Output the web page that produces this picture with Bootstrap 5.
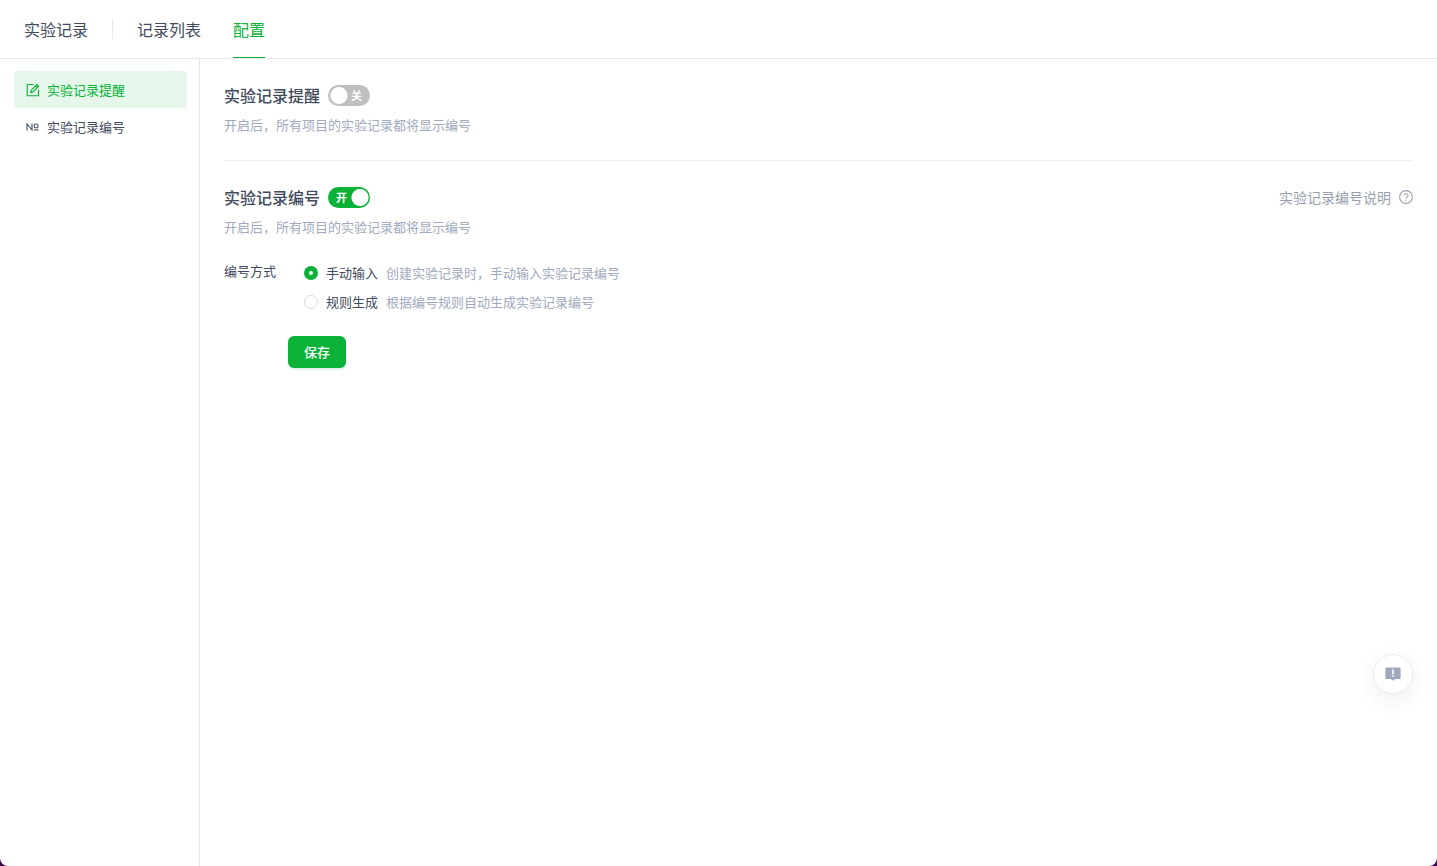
<!DOCTYPE html>
<html lang="zh-CN">
<head>
<meta charset="utf-8">
<meta name="viewport" content="width=device-width, initial-scale=1">
<title>实验记录 - 配置</title>
<link href="https://cdn.jsdelivr.net/npm/bootstrap@5.3.0/dist/css/bootstrap.min.css" rel="stylesheet">
<style>
  :root {
    --brand: #0bb237;
    --brand-soft: #e5f7eb;
    --ink: #414b5c;
    --ink-soft: #a0a9bd;
    --rule: #e8e9ed;
  }
  body {
    background: #3a0a4a;
    color: var(--ink);
    font-family: "Noto Sans CJK SC", sans-serif;
    font-size: 13px;
    line-height: 20px;
  }
  .shell { background: #fff; border-radius: 0 0 8px 8px; overflow: hidden; }
  .topbar { border-bottom: 1px solid var(--rule); padding: 0 24px; font-size: 16px; line-height: 24px; }
  .topbar .divider { width: 1px; height: 20px; background: var(--rule); margin: 0 24px; }
  .topbar .nav { gap: 32px; }
  .topbar .nav-link { color: var(--ink); padding: 17px 0 16px; border-bottom: 1px solid transparent; }
  .topbar .nav-link.active { color: var(--brand); border-color: var(--brand); }
  .sidebar { width: 200px; border-right: 1px solid var(--rule); padding: 12px 12px 12px 14px; }
  .sidebar .nav-link { color: var(--ink); padding: 9px 12px 8px; border-radius: 4px; gap: 7px; }
  .sidebar .nav-link.active { color: var(--brand); background: var(--brand-soft); }
  .panel { padding: 24px 0 25px; }
  .panel + .panel { border-top: 1px solid #f0f0f0; }
  .panel-title { font-size: 16px; line-height: 24px; font-weight: 500; margin: 0; }
  .hint { color: var(--ink-soft); }
  .panel-hint { margin: 8px 0 0; }
  .toggle { width: 42px; height: 21px; }
  .toggle input {
    appearance: none; display: block; width: 42px; height: 21px; margin: 0; border-radius: 11px; cursor: pointer;
    background: radial-gradient(circle at 11px 50%, #fff 8px, transparent 9px) #bfbfbf;
  }
  .toggle input:checked { background: radial-gradient(circle at 32px 50%, #fff 8px, transparent 9px) var(--brand); }
  .toggle label { position: absolute; top: 0; right: 8px; color: #fff; font-size: 11px; font-weight: 700; line-height: 21px; pointer-events: none; }
  .toggle input:checked + label { right: auto; left: 8px; }
  .toggle .on, .toggle input:checked + label .off { display: none; }
  .toggle input:checked + label .on { display: inline; }
  .help { color: #979fae; font-size: 14px; }
  .mode-list { gap: 9px; padding-top: 2px; margin-left: 28px; }
  .mode-list input {
    appearance: none; width: 14px; height: 14px; margin: 0; border: 1px solid #d9d9d9; border-radius: 50%; background: #fff;
  }
  .mode-list input:checked { border: 5px solid var(--brand); }
  .btn-save {
    --bs-btn-bg: var(--brand); --bs-btn-color: #fff; --bs-btn-hover-bg: #099c30; --bs-btn-hover-color: #fff;
    --bs-btn-border-width: 0; --bs-btn-font-size: 13px; --bs-btn-line-height: 20px; --bs-btn-border-radius: 6px;
    --bs-btn-padding-x: 16px; --bs-btn-padding-y: 6px; --bs-btn-font-weight: 500;
    --bs-btn-box-shadow: none;
    margin: 24px 0 0 64px;
  }
  .btn.btn-save { box-shadow: 0 2px 0 #e2f2e7; }
  .feedback {
    position: fixed; right: 24px; bottom: 172px; width: 40px; height: 40px; padding: 0;
    border: 1px solid #e9ebf3; border-radius: 50%; background: #fff; box-shadow: 0 6px 20px rgba(40, 50, 80, .08);
  }
</style>
</head>
<body>
<div class="shell min-vh-100 d-flex flex-column">
  <header class="topbar d-flex align-items-center">
    <span>实验记录</span>
    <span class="divider"></span>
    <nav class="nav">
      <a class="nav-link" href="#list">记录列表</a>
      <a class="nav-link active" href="#config" aria-current="page">配置</a>
    </nav>
  </header>
  <div class="d-flex flex-grow-1">
    <aside class="sidebar flex-shrink-0">
      <nav class="nav flex-column">
        <a class="nav-link active d-flex align-items-center" href="#remind">
          <svg width="14" height="14" viewBox="0 0 14 14" fill="none" stroke="currentColor" stroke-width="1.1" aria-hidden="true"><path d="M7.500 1.500H1.200v11.300h11.300V6.800"/><path d="M4.700 9.400l.5-2.200 5.700-5.700 1.700 1.700-5.700 5.700zM9.600 2.800l1.700 1.700"/></svg>
          <span>实验记录提醒</span>
        </a>
        <a class="nav-link d-flex align-items-center" href="#number">
          <svg width="14" height="14" viewBox="0 0 14 14" fill="none" stroke="currentColor" stroke-width="1.1" aria-hidden="true"><path d="M1 10.500V4l5 6V3.500"/><rect x="8.300" y="4" width="3.700" height="3.800" rx="1.400"/><path d="M8 9.900h4.500"/></svg>
          <span>实验记录编号</span>
        </a>
      </nav>
    </aside>
    <main class="flex-grow-1 px-4">
      <section class="panel" id="remind">
        <div class="d-flex align-items-center gap-2">
          <h2 class="panel-title">实验记录提醒</h2>
          <div class="toggle position-relative">
            <input type="checkbox" role="switch" id="remindSwitch" aria-label="实验记录提醒">
            <label for="remindSwitch"><span class="on">开</span><span class="off">关</span></label>
          </div>
        </div>
        <p class="hint panel-hint">开启后，所有项目的实验记录都将显示编号</p>
      </section>
      <section class="panel" id="number">
        <div class="d-flex align-items-center gap-2">
          <h2 class="panel-title">实验记录编号</h2>
          <div class="toggle position-relative">
            <input type="checkbox" role="switch" id="numberSwitch" aria-label="实验记录编号" checked>
            <label for="numberSwitch"><span class="on">开</span><span class="off">关</span></label>
          </div>
          <a class="help ms-auto d-flex align-items-center gap-2 text-decoration-none" href="#help">
            <span>实验记录编号说明</span>
            <svg width="14" height="14" viewBox="0 0 14 14" fill="none" stroke="currentColor" stroke-width="1.1" aria-hidden="true"><circle cx="7" cy="7" r="6.400"/><path d="M5 5.600a2 1.900 0 1 1 2.900 1.700c-.6.3-.9.6-.9 1.300"/><path d="M7 9.500v1.200"/></svg>
          </a>
        </div>
        <p class="hint panel-hint">开启后，所有项目的实验记录都将显示编号</p>
        <form>
          <div class="d-flex mt-4" role="radiogroup" aria-labelledby="modeLabel">
            <span id="modeLabel">编号方式</span>
            <div class="mode-list d-flex flex-column">
              <div class="d-flex align-items-center gap-2">
                <input type="radio" name="mode" id="manual" checked>
                <label for="manual">手动输入</label>
                <span class="hint">创建实验记录时，手动输入实验记录编号</span>
              </div>
              <div class="d-flex align-items-center gap-2">
                <input type="radio" name="mode" id="auto">
                <label for="auto">规则生成</label>
                <span class="hint">根据编号规则自动生成实验记录编号</span>
              </div>
            </div>
          </div>
          <button type="button" class="btn btn-save">保存</button>
        </form>
      </section>
    </main>
  </div>
</div>
<button type="button" class="feedback d-flex align-items-center justify-content-center" aria-label="反馈">
  <svg width="16" height="16" viewBox="0 0 16 16" aria-hidden="true"><path fill="#a0a9bd" d="M1 1.600h14q.6 0 .6.600v10.200q0 .6-.6.6h-5L8 14.700 6 13H1q-.6 0-.6-.6V2.200q0-.6.6-.6z"/><path fill="#fff" d="M7.200 3.500h1.600v5H7.200zM7.200 9.600h1.600v1.500H7.200z"/></svg>
</button>
<script src="https://cdn.jsdelivr.net/npm/bootstrap@5.3.0/dist/js/bootstrap.bundle.min.js"></script>
</body>
</html>
